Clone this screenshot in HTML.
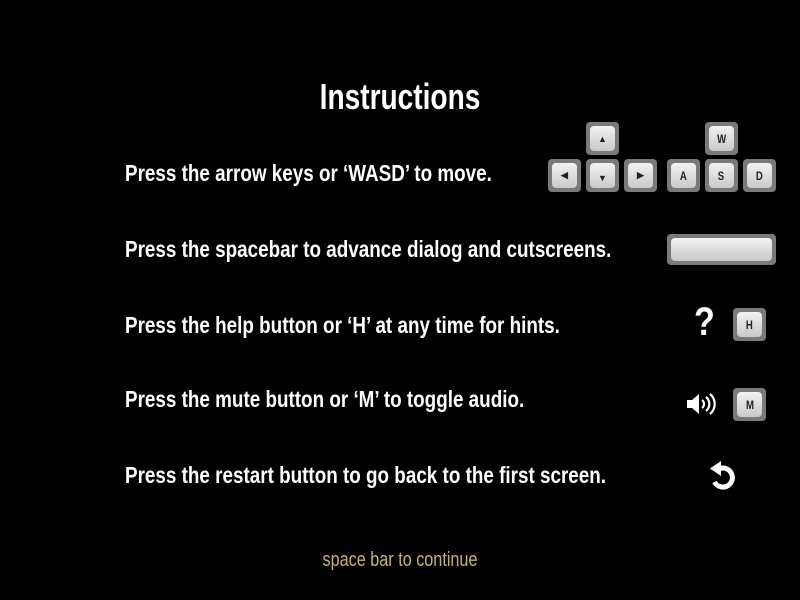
<!DOCTYPE html>
<html><head><meta charset="utf-8"><style>
body{margin:0;width:800px;height:600px;background:#000;overflow:hidden;position:relative;font-family:"Liberation Sans",sans-serif;color:#fff}
.t{position:absolute;white-space:nowrap;font-weight:bold;transform:scaleX(0.82);transform-origin:0 0}
.c{left:0;width:800px;text-align:center;transform-origin:400px 0}
.k{position:absolute;width:33px;height:33px;box-sizing:border-box;border-radius:4px;background:#7a7a7a;padding:4px}
.k div{width:100%;height:100%;border-radius:4px;background:linear-gradient(#f2f2f2,#c9c9c9);color:#222;font:bold 12px "Liberation Sans",sans-serif;display:flex;align-items:center;justify-content:center}
.k span{display:inline-block;transform:scaleX(0.8)}
</style></head><body>
<div class="t c" style="top:76px;font-size:36px;transform:scaleX(0.78)">Instructions</div>
<div class="t" style="left:125px;top:160px;font-size:23px">Press the arrow keys or ‘WASD’ to move.</div>
<div class="t" style="left:125px;top:236px;font-size:23px">Press the spacebar to advance dialog and cutscreens.</div>
<div class="t" style="left:125px;top:312px;font-size:23px">Press the help button or ‘H’ at any time for hints.</div>
<div class="t" style="left:125px;top:386px;font-size:23px">Press the mute button or ‘M’ to toggle audio.</div>
<div class="t" style="left:125px;top:462px;font-size:23px">Press the restart button to go back to the first screen.</div>
<div class="t c" style="top:549px;font-size:20px;font-weight:normal;color:#c9b56a;transform:scaleX(0.81)">space bar to continue</div>

<div class="k" style="left:586px;top:122px"><div style="font-size:9px">▲</div></div>
<div class="k" style="left:548px;top:159px"><div style="font-size:9px">◀</div></div>
<div class="k" style="left:586px;top:159px"><div style="font-size:9px;padding-top:5px;box-sizing:border-box">▼</div></div>
<div class="k" style="left:624px;top:159px"><div style="font-size:9px">▶</div></div>
<div class="k" style="left:705px;top:122px"><div><span>W</span></div></div>
<div class="k" style="left:667px;top:159px"><div><span>A</span></div></div>
<div class="k" style="left:705px;top:159px"><div><span>S</span></div></div>
<div class="k" style="left:743px;top:159px"><div><span>D</span></div></div>
<div class="k" style="left:667px;top:234px;width:109px;height:31px"><div></div></div>
<div class="k" style="left:733px;top:308px"><div><span>H</span></div></div>
<div class="k" style="left:733px;top:388px"><div><span>M</span></div></div>

<div class="t" style="left:694px;top:300px;font-size:40px;transform:scaleX(0.85)">?</div>
<svg style="position:absolute;left:684px;top:390px" width="34" height="28" viewBox="0 0 34 28">
<path d="M3 10h5l7-6v20l-7-6H3z" fill="#fff"/>
<path d="M18 10a5 5 0 0 1 0 8" stroke="#fff" stroke-width="2.2" fill="none"/>
<path d="M22 7a9 9 0 0 1 0 14" stroke="#fff" stroke-width="2.2" fill="none"/>
<path d="M26 4a13 13 0 0 1 0 20" stroke="#fff" stroke-width="2.2" fill="none"/>
</svg>
<svg style="position:absolute;left:700px;top:453px" width="48" height="45" viewBox="0 0 48 45">
<path d="M20 15.5A9.5 9.5 0 1 1 14.5 29" stroke="#fff" stroke-width="5" fill="none"/>
<path d="M10 15.5L21 8v15z" fill="#fff"/>
</svg>
</body></html>
